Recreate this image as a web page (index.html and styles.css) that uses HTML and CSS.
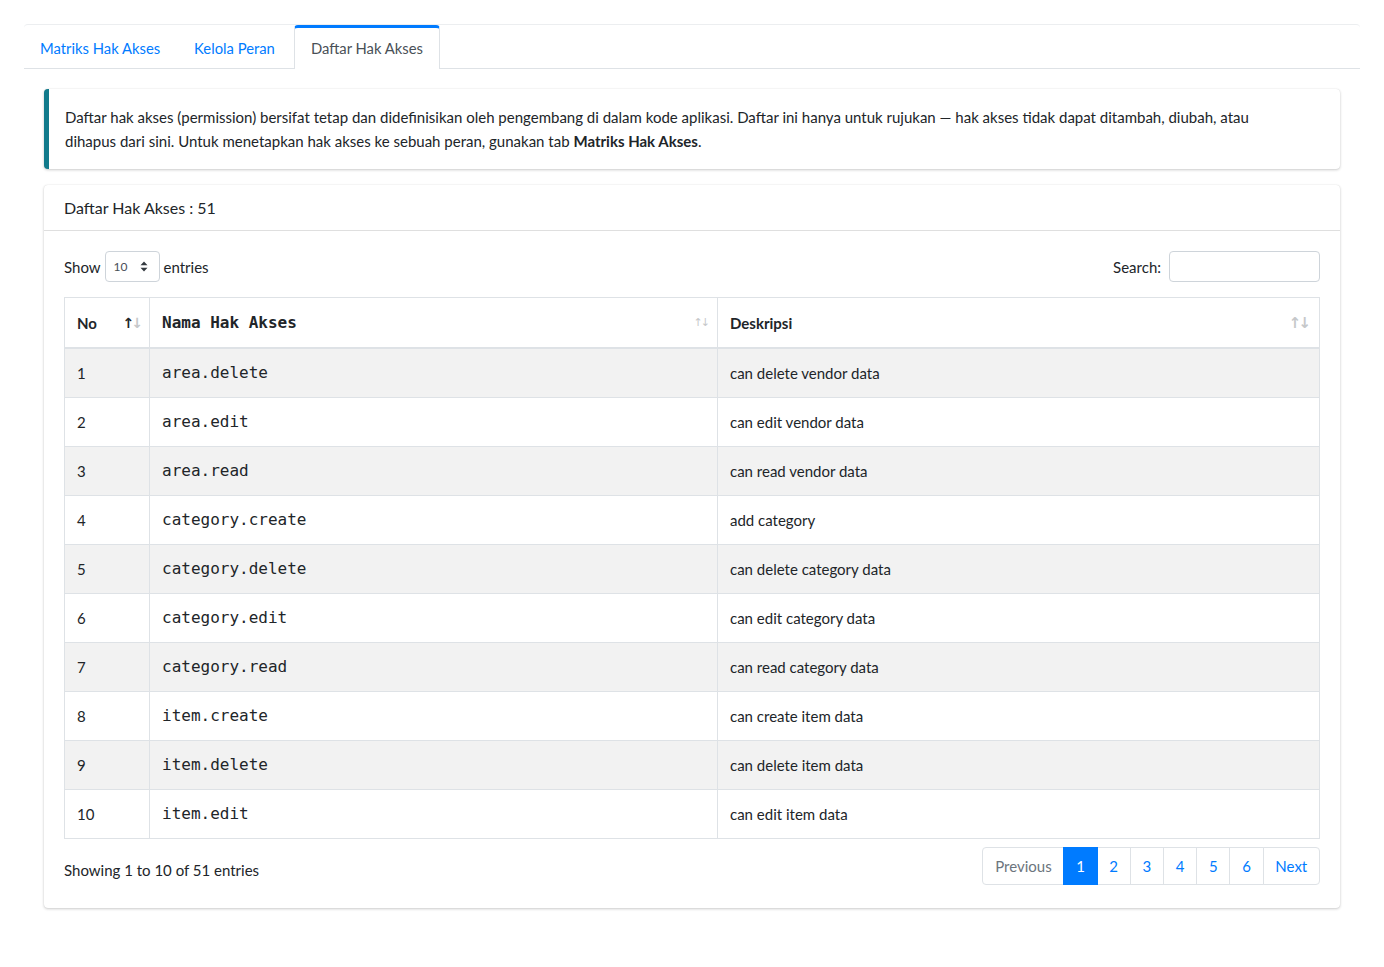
FILE: index.html
```html
<!DOCTYPE html>
<html lang="id">
<head>
<meta charset="utf-8">
<title>Daftar Hak Akses</title>
<link rel="stylesheet" href="styles.css">
</head>
<body>
<div class="page">
  <div class="tabs-card">
    <div class="tabs-header">
      <ul class="nav-tabs">
        <li><a class="tab-link">Matriks Hak Akses</a></li>
        <li><a class="tab-link">Kelola Peran</a></li>
        <li><a class="tab-link active">Daftar Hak Akses</a></li>
      </ul>
    </div>
    <div class="tabs-body">
      <div class="callout">
        <p>Daftar hak akses (permission) bersifat tetap dan didefinisikan oleh pengembang di dalam kode aplikasi. Daftar ini hanya untuk rujukan — hak akses tidak dapat ditambah, diubah, atau dihapus dari sini. Untuk menetapkan hak akses ke sebuah peran, gunakan tab <b>Matriks Hak Akses</b>.</p>
      </div>
      <div class="card">
        <div class="card-header">Daftar Hak Akses : 51</div>
        <div class="card-body">
          <div class="dt-top">
            <label class="dt-length">Show
              <span class="select">10
                <svg width="8" height="11" viewBox="0 0 8 11"><path d="M4 0.5 L7.5 4.3 L0.5 4.3 Z M4 10.5 L7.5 6.7 L0.5 6.7 Z" fill="#343a40"/></svg>
              </span>entries</label>
            <label class="dt-search">Search: <input type="text" class="search-input"></label>
          </div>
          <table class="dt-table">
            <colgroup><col class="c-no"><col class="c-name"><col class="c-desc"></colgroup>
            <thead>
              <tr>
                <th><div class="th-in"><span>No</span><span class="sort"><span class="on">↑</span><span>↓</span></span></div></th>
                <th class="mono"><div class="th-in"><span>Nama Hak Akses</span><span class="sort sm"><span>↑</span><span>↓</span></span></div></th>
                <th><div class="th-in"><span>Deskripsi</span><span class="sort lg"><span>↑</span><span>↓</span></span></div></th>
              </tr>
            </thead>
            <tbody>
              <tr><td>1</td><td class="mono">area.delete</td><td>can delete vendor data</td></tr>
              <tr><td>2</td><td class="mono">area.edit</td><td>can edit vendor data</td></tr>
              <tr><td>3</td><td class="mono">area.read</td><td>can read vendor data</td></tr>
              <tr><td>4</td><td class="mono">category.create</td><td>add category</td></tr>
              <tr><td>5</td><td class="mono">category.delete</td><td>can delete category data</td></tr>
              <tr><td>6</td><td class="mono">category.edit</td><td>can edit category data</td></tr>
              <tr><td>7</td><td class="mono">category.read</td><td>can read category data</td></tr>
              <tr><td>8</td><td class="mono">item.create</td><td>can create item data</td></tr>
              <tr><td>9</td><td class="mono">item.delete</td><td>can delete item data</td></tr>
              <tr><td>10</td><td class="mono">item.edit</td><td>can edit item data</td></tr>
            </tbody>
          </table>
          <div class="dt-bottom">
            <div class="dt-info">Showing 1 to 10 of 51 entries</div>
            <ul class="pagination">
              <li class="page-item disabled"><a class="page-link">Previous</a></li>
              <li class="page-item active"><a class="page-link">1</a></li>
              <li class="page-item"><a class="page-link">2</a></li>
              <li class="page-item"><a class="page-link">3</a></li>
              <li class="page-item"><a class="page-link">4</a></li>
              <li class="page-item"><a class="page-link">5</a></li>
              <li class="page-item"><a class="page-link">6</a></li>
              <li class="page-item"><a class="page-link">Next</a></li>
            </ul>
          </div>
        </div>
      </div>
    </div>
  </div>
</div>
</body>
</html>
```

FILE: styles.css
```css
* { box-sizing: border-box; }
html, body { margin: 0; padding: 0; background: #fff; }
body {
  font-family: Lato, "Liberation Sans", sans-serif;
  font-size: 15px;
  line-height: 24px;
  color: #212529;
}
.page { padding: 24px 24px 0; }

.tabs-card {
  border-top: 1px solid #eceef0;
  border-radius: 4px;
}
.tabs-header {
  border-bottom: 1px solid #dee2e6;
  height: 44px;
}
.nav-tabs {
  list-style: none;
  margin: 0;
  padding: 0;
  display: flex;
  height: 44px;
}
.tab-link {
  display: block;
  height: 44px;
  padding: 8px 16px 12px;
  font-size: 14.8px;
  color: #007bff;
  border: 1px solid transparent;
  border-top: 3px solid transparent;
  border-bottom: 0;
  cursor: pointer;
}
.nav-tabs li:first-child .tab-link { margin-left: -1px; }
.tab-link.active {
  color: #495057;
  background: #fff;
  border-color: #dee2e6;
  border-top-color: #007bff;
  height: 44px;
  margin-left: 2px;
  border-radius: 4px 4px 0 0;
}
.tabs-body { padding: 20px 20px 16px; }

.callout {
  border-left: 5px solid #117a8b;
  border-radius: 4px;
  box-shadow: 0 1px 3px rgba(0,0,0,.2), 0 0 1px rgba(0,0,0,.125);
  padding: 16px;
  margin-bottom: 16px;
  background: #fff;
}
.callout p { margin: 0; max-width: 1225px; }

.card {
  border-radius: 4px;
  box-shadow: 0 1px 3px rgba(0,0,0,.2), 0 0 1px rgba(0,0,0,.125);
  background: #fff;
}
.card-header {
  padding: 11px 20px;
  font-size: 16px;
  line-height: 23px;
  border-bottom: 1px solid rgba(0,0,0,.125);
}
.card-body { padding: 20px 20px 23px; }

.dt-top {
  display: flex;
  justify-content: space-between;
  align-items: center;
  height: 31px;
}
.dt-length, .dt-search {
  display: flex;
  align-items: center;
  gap: 4px;
}
.dt-search { gap: 8px; }
.select {
  display: inline-flex;
  align-items: center;
  justify-content: space-between;
  width: 55px;
  height: 31px;
  padding: 0 11px 0 8px;
  border: 1px solid #ced4da;
  border-radius: 4px;
  font-size: 12px;
  line-height: 1;
  color: #495057;
}
.search-input {
  width: 151px;
  height: 31px;
  border: 1px solid #ced4da;
  border-radius: 4px;
  padding: 4px 8px;
  font: inherit;
}

.dt-table {
  width: 100%;
  border-collapse: collapse;
  margin-top: 15px;
  table-layout: fixed;
  border: 1px solid #dee2e6;
}
.c-no { width: 85px; }
.c-name { width: 568px; }
.dt-table th, .dt-table td {
  border: 1px solid #dee2e6;
  padding: 12px 12px;
  text-align: left;
  vertical-align: middle;
  line-height: 24px;
}
.dt-table th {
  border-bottom: 2px solid #dee2e6;
  font-weight: 700;
  padding-right: 9px;
  padding-top: 13px;
  padding-bottom: 12px;
}
.dt-table td { font-size: 15px; }
.dt-table th:first-child { font-size: 15px; }
.dt-table tbody tr:nth-child(odd) { background: #f2f2f2; }
.mono {
  font-family: "DejaVu Sans Mono", "Liberation Mono", monospace;
}
.dt-table td.mono { font-size: 16px; }
.dt-table th.mono { font-size: 16px; }
.th-in {
  display: flex;
  justify-content: space-between;
  align-items: center;
}
.sort {
  display: flex;
  font-family: "DejaVu Sans", sans-serif;
  font-size: 14px;
  font-weight: 700;
  color: #c6c8ca;
  letter-spacing: -3px;
  padding-right: 0;
}
.sort.sm { font-size: 11px; font-weight: 400; letter-spacing: -2px; padding-right: 0; }
.sort.lg { font-size: 15px; padding-right: 2px; }
.sort .on { color: #212529; }

.dt-bottom {
  display: flex;
  justify-content: space-between;
  align-items: center;
  margin-top: 8px;
}
.dt-info { padding-top: 8px; }
.pagination {
  list-style: none;
  display: flex;
  margin: 0;
  padding: 0;
}
.page-link {
  display: block;
  padding: 7px 11.75px 7px;
  line-height: 22px;
  border: 1px solid #dee2e6;
  margin-left: -1px;
  color: #007bff;
  background: #fff;
  cursor: pointer;
}
.page-item:first-child .page-link { margin-left: 0; border-radius: 4px 0 0 4px; }
.page-item:last-child .page-link { border-radius: 0 4px 4px 0; }
.page-item.disabled .page-link { color: #6c757d; }
.page-item.active .page-link {
  background: #007bff;
  border-color: #007bff;
  color: #fff;
  position: relative;
  z-index: 1;
}
```
